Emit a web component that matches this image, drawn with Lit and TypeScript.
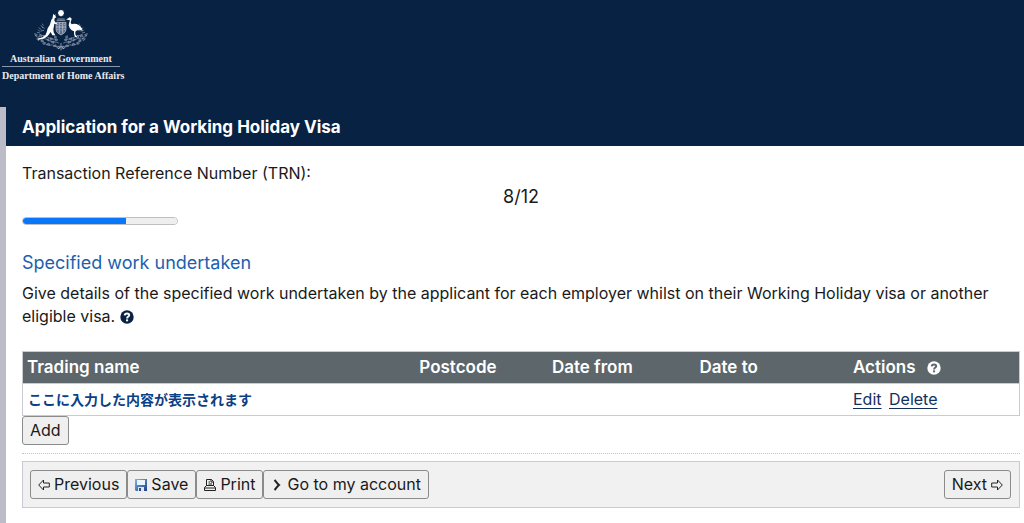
import { LitElement, html, css, svg } from "lit";
import { customElement, property } from "lit/decorators.js";

@customElement("help-icon")
export class HelpIcon extends LitElement {
  static styles = css`
    :host { display: inline-block; vertical-align: -2px; }
    svg { display: block; }
    .mark { fill: none; stroke: var(--mark, #fff); stroke-width: 2; }
    .dot { fill: var(--mark, #fff); }
  `;
  render() {
    return html`<svg width="14" height="14" viewBox="0 0 14 14" role="img" aria-label="Help">
      <circle cx="7" cy="7" r="6.7" fill="currentColor" />
      <path class="mark" d="M4.7 5.4C4.9 3.9 5.9 3.5 7 3.5C8.3 3.5 9.2 4.2 9.2 5.2C9.2 6.6 7.1 6.5 7.1 8.5" />
      <rect class="dot" x="6" y="9.4" width="2.1" height="1.9" />
    </svg>`;
  }
}

/* One side of the wattle sprays around the shield; the other side is its mirror image. */
const spray = svg`
  <path d="M104 122C92 124 84 116 74 118S56 112 50 104S34 96 30 88" />
  <path d="M100 112C90 106 84 112 74 106S58 98 48 98" />
  <path d="M96 104C88 98 80 102 70 96S54 92 42 86" />
  <path d="M28 84l8 3-4 5zM40 92l7-5 2 7zM34 100l8-2-2 7zM46 106l7-4 0 7zM56 88l6 6-8 2zM52 112l8-1-4 6zM64 102l7-3-1 7zM64 116l7-4 2 7zM76 96l6 4-6 4zM78 110l7-4 1 7zM84 122l6-5 3 6zM92 98l5 5-7 2zM88 90l6 4-6 3zM94 126l8-4 0 7z" />
  <path d="M44 78l-6-6M48 72l-8-6M52 66l-5-7M56 74l-10 2M44 82l-9-2M54 60l-3-6M58 68l-8-4" />
`;

@customElement("coat-of-arms")
export class CoatOfArms extends LitElement {
  static styles = css`
    :host { display: block; }
    svg { display: block; margin: 0 auto; }
    .spray { fill: none; stroke: #b9c3d3; stroke-width: 2; opacity: 0.8; }
    .solid { fill: #fff; }
    .shield { fill: #5c6c86; stroke: #c9d1dd; stroke-width: 2; }
    .detail { fill: none; stroke: #c9d1dd; stroke-width: 2; }
  `;
  render() {
    return html`<svg width="56" height="42" viewBox="23 10 168 126" role="img" aria-label="Commonwealth Coat of Arms">
      <g class="spray">${spray}</g>
      <g class="spray" transform="translate(214 0) scale(-1 1)">${spray}</g>
      <path class="shield" d="M92 50H122V70C122 80 114 84 107 88C100 84 92 80 92 70Z" />
      <path class="detail" d="M102 50V83M112 50V83M92 64H122M95 56h4M105 57h4M115 56h4M95 71h4M105 73h4M115 71h4" />
      <path class="detail" d="M94 44H120M96 40H118M98 130L107 122L116 130M107 112V134" />
      <path class="solid" d="M107 12l3 4 4-2-1 5 4 3-4 3 1 5-4-1-3 4-3-4-4 1 1-5-4-3 4-3-1-5 4 2z" />
      <circle class="solid" cx="107" cy="22" r="8" />
      <path class="solid" d="M84 24l3 5 3-4 0 6 3 4-5 3-1 6 4 7 4 2-1 3-7-2-1 7-2 10 1 9 5 9h-9l-5-10-7 10-7 6-8 4-16 3 0-3 14-4 8-6 4-9 3-12 6-9 3-9 2-8 3-3z" />
      <path class="solid" d="M122 41l7-3 3-3 5 1 2 4-2 6-1 5 3 5 6-2 9 1 9 5 6 7 3 9-6-3-5-1-8 3-3 3 0 8 6 9-7-1-3-9 0-8-7-3-6-7-3-8 2-9 2-6-5-1z" />
    </svg>`;
  }
}

@customElement("app-root")
export class AppRoot extends LitElement {
  @property({ type: Number }) step = 8;
  @property({ type: Number }) steps = 12;

  static styles = css`
    :host {
      display: flex;
      flex-direction: column;
      min-height: 100vh;
      background: #fff;
      color: #1a1a1a;
      font: 16px/23px Inter, "Noto Sans CJK JP", sans-serif;
    }
    .banner { background: #082243; color: #e8ebf0; height: 107px; box-sizing: border-box; padding: 9px 2px 0; }
    .logo { width: 118px; text-align: center; font: bold 10px/15px "Liberation Serif", serif; white-space: nowrap; }
    .gov { border-bottom: 1px solid #8a97aa; margin-bottom: 1px; }
    .page { flex: 1; border-left: 6px solid #bbbcc8; }
    h1 { margin: 0; padding: 9px 16px 7px; background: #082243; color: #fff; font-size: 17px; line-height: 23px; font-weight: 700; }
    main { padding: 16px 4px 15px 16px; }
    p { margin: 0; }
    .step { text-align: center; font-size: 18px; }
    progress {
      display: block;
      appearance: none;
      box-sizing: border-box;
      width: 156px;
      height: 8px;
      margin: 9px 0 26px;
      border: 1px solid #bfbfbf;
      border-radius: 4px;
      background: #eee;
      overflow: hidden;
    }
    progress::-webkit-progress-bar { background: #eee; }
    progress::-webkit-progress-value { background: #0a77fb; }
    h2 { margin: 0 0 7px; color: #1b5fb0; font-size: 18px; line-height: 24px; font-weight: 400; }
    .help { color: #082243; }
    table { width: 100%; margin-top: 23px; table-layout: fixed; border-collapse: collapse; border: 1px solid #c9cad2; }
    th, td { box-sizing: border-box; padding: 4px; text-align: left; }
    th { background: #5c666b; color: #fff; font-size: 17px; font-weight: 600; border-bottom: 1px solid #c9cad2; }
    th help-icon { --mark: #5c666b; margin-left: 7px; }
    .name { width: 39.4%; }
    .code { width: 13.3%; }
    .from { width: 14.8%; }
    .to { width: 15.4%; }
    .entry { padding-left: 5px; font-size: 14px; font-weight: 700; color: #0d3f85; font-family: "Noto Sans CJK JP", sans-serif; }
    a { color: #12305c; text-underline-offset: 3px; margin-right: 3px; }
    button {
      display: inline-flex;
      align-items: center;
      gap: 4px;
      height: 29px;
      padding: 0 7px;
      border: 1px solid #8b8b8b;
      border-radius: 3px;
      background: #efefef;
      color: #1a1a1a;
      font: inherit;
      white-space: nowrap;
    }
    .add { display: flex; }
    hr { margin: 8px 0 7px; border: 0; border-top: 1px dotted #c4c4c4; }
    .toolbar { display: flex; justify-content: space-between; padding: 8px 8px 8px 7px; border: 1px solid #c9cad2; background: #f1f1f1; }
    .group { display: flex; }
    svg { flex: none; fill: none; stroke: #222; }
  `;

  render() {
    return html`
      <header class="banner">
        <div class="logo">
          <coat-of-arms></coat-of-arms>
          <div class="gov">Australian Government</div>
          <div>Department of Home Affairs</div>
        </div>
      </header>
      <div class="page">
        <h1>Application for a Working Holiday Visa</h1>
        <main>
          <p>Transaction Reference Number (TRN):</p>
          <p class="step">${this.step}/${this.steps}</p>
          <progress aria-label="Application progress" max=${this.steps} value=${this.step}></progress>
          <h2>Specified work undertaken</h2>
          <p>
            Give details of the specified work undertaken by the applicant for each employer whilst on their Working
            Holiday visa or another eligible visa. <help-icon class="help"></help-icon>
          </p>
          <table>
            <thead>
              <tr>
                <th class="name">Trading name</th>
                <th class="code">Postcode</th>
                <th class="from">Date from</th>
                <th class="to">Date to</th>
                <th>Actions <help-icon></help-icon></th>
              </tr>
            </thead>
            <tbody>
              <tr>
                <td class="entry">ここに入力した内容が表示されます</td>
                <td></td>
                <td></td>
                <td></td>
                <td><a href="#edit">Edit</a> <a href="#delete">Delete</a></td>
              </tr>
            </tbody>
          </table>
          <button class="add" type="button">Add</button>
          <hr />
          <div class="toolbar">
            <div class="group">
              <button type="button">
                <svg width="12" height="12" viewBox="0 0 12 12" aria-hidden="true">
                  <path d="M0.7 6L5.5 1V4H11.3V8H5.5V11Z" />
                </svg>
                Previous
              </button>
              <button type="button">
                <svg width="12" height="12" viewBox="0 0 12 12" aria-hidden="true">
                  <defs>
                    <linearGradient id="disk" x1="0" y1="0" x2="1" y2="1">
                      <stop offset="0" stop-color="#7fb6e8" />
                      <stop offset="1" stop-color="#1c3f86" />
                    </linearGradient>
                  </defs>
                  <path d="M0 0H12V12H1L0 11Z" fill="url(#disk)" stroke="none" />
                  <path d="M2 1H10V6H2Z" fill="#eaf4fd" stroke="none" />
                  <path d="M3 8H9V12H3Z" fill="#dfe6f2" stroke="none" />
                  <path d="M4 9H6V12H4Z" fill="#2b4c8c" stroke="none" />
                </svg>
                Save
              </button>
              <button type="button">
                <svg width="12" height="12" viewBox="0 0 12 12" aria-hidden="true">
                  <path d="M2.5 7V0.5H7.5L9.5 2.5V7M7 0.5V3H9.5M4.5 3H6M4.5 5H8M0.5 11.5V8.5L2.5 6.5H9.5L11.5 8.5V11.5ZM0.5 9H11.5" />
                </svg>
                Print
              </button>
              <button type="button">
                <svg width="12" height="12" viewBox="0 0 12 12" aria-hidden="true">
                  <path d="M3.5 1C5 2.5 6 4.5 8 6C6 7.5 5 9.5 3.5 11" stroke-width="2" />
                </svg>
                Go to my account
              </button>
            </div>
            <button type="button">
              Next
              <svg width="12" height="12" viewBox="0 0 12 12" aria-hidden="true">
                <path d="M11.3 6L6.5 1V4H0.7V8H6.5V11Z" />
              </svg>
            </button>
          </div>
        </main>
      </div>
    `;
  }
}
